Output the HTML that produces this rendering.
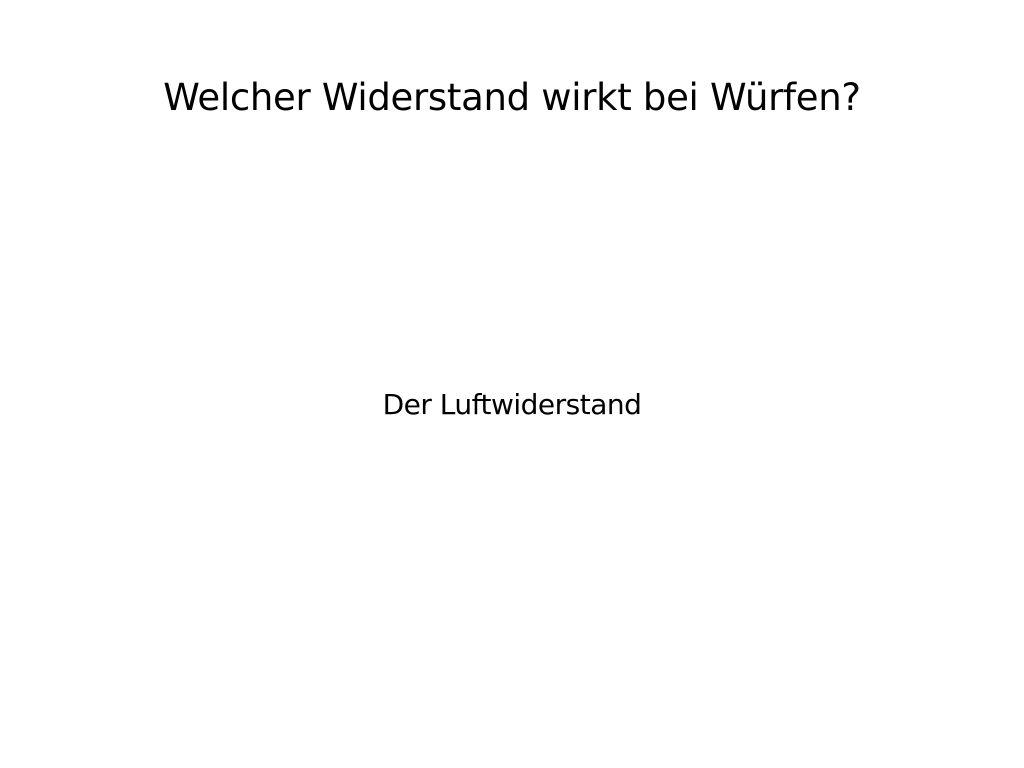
<!DOCTYPE html>
<html><head><meta charset="utf-8"><style>
html,body{margin:0;padding:0;background:#fff;width:1024px;height:768px;overflow:hidden;font-family:"DejaVu Sans","Liberation Sans",sans-serif;color:#000}
.t{position:absolute;left:0;width:1024px;text-align:center;top:75px;font-size:37px;line-height:46px;letter-spacing:-0.3px}
.a{position:absolute;left:0;width:1024px;text-align:center;top:388px;font-size:28px;line-height:34px;letter-spacing:-0.5px}
</style></head><body>
<div class="t">Welcher Widerstand wirkt bei Würfen?</div>
<div class="a">Der Luftwiderstand</div>
</body></html>
